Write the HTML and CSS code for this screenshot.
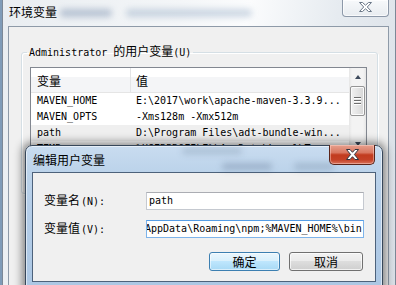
FILE: index.html
```html
<!DOCTYPE html>
<html lang="zh-CN">
<head>
<meta charset="utf-8">
<title>环境变量</title>
<link rel="stylesheet" href="styles.css">
</head>
<body>
<div class="desktop">
  <section class="win win-env">
    <header class="titlebar">
      <span class="title">环境变量</span>
      <span class="smudge s1" aria-hidden="true"></span>
      <span class="smudge s2" aria-hidden="true"></span>
      <span class="close close-off" aria-label="关闭">
        <svg width="13" height="10" viewBox="0 0 13 10"><polygon points="0.5,0.5 3.5,0.5 6.5,3.2 9.5,0.5 12.5,0.5 8.3,5 12.5,9.5 9.5,9.5 6.5,6.8 3.5,9.5 0.5,9.5 4.7,5" fill="#fff" stroke="#6b7888" stroke-width="1"/></svg>
      </span>
    </header>
    <div class="client">
      <fieldset class="group">
        <legend><span class="mono">Administrator </span>的用户变量<span class="mono">(U)</span></legend>
        <div class="listview">
          <div class="lv-main">
            <div class="lv-head"><div class="c1">变量</div><div class="c2">值</div></div>
            <div class="lv-row"><div class="c1">MAVEN_HOME</div><div class="c2">E:\2017\work\apache-maven-3.3.9...</div></div>
            <div class="lv-row"><div class="c1">MAVEN_OPTS</div><div class="c2">-Xms128m -Xmx512m</div></div>
            <div class="lv-row sel"><div class="c1">path</div><div class="c2">D:\Program Files\adt-bundle-win...</div></div>
            <div class="lv-row"><div class="c1">TEMP</div><div class="c2">%USERPROFILE%\AppData\Local\Temp</div></div>
          </div>
          <div class="scrollbar">
            <div class="sb-btn"><span class="arrow up"></span></div>
            <div class="sb-thumb"><i></i><i></i><i></i></div>
            <div class="sb-track"></div>
            <div class="sb-btn"><span class="arrow down"></span></div>
          </div>
        </div>
      </fieldset>
    </div>
  </section>

  <section class="win win-edit">
    <header class="titlebar">
      <span class="title">编辑用户变量</span>
      <span class="smudge d1" aria-hidden="true"></span>
      <span class="smudge d2" aria-hidden="true"></span>
      <span class="smudge d3" aria-hidden="true"></span>
      <span class="close close-red" aria-label="关闭">
        <svg width="13" height="11" viewBox="0 0 13 11"><polygon points="0.5,0.5 4,0.5 6.5,3.3 9,0.5 12.5,0.5 8.4,5.5 12.5,10.5 9,10.5 6.5,7.7 4,10.5 0.5,10.5 4.6,5.5" fill="#fff" stroke="#2f3440" stroke-width="1"/></svg>
      </span>
    </header>
    <div class="client client-edit">
      <div class="form">
        <label class="lbl">变量名<span class="mono">(N):</span></label>
        <div class="field"><span class="mono">path</span></div>
        <label class="lbl">变量值<span class="mono">(V):</span></label>
        <div class="field focus"><span class="mono val">AppData\Roaming\npm;%MAVEN_HOME%\bin</span></div>
      </div>
      <div class="buttons">
        <button class="btn default">确定</button>
        <button class="btn cancel">取消</button>
      </div>
    </div>
  </section>
</div>
</body>
</html>
```
FILE: styles.css
```css
* { box-sizing: border-box; }
html, body { margin: 0; padding: 0; }
body {
  width: 396px;
  height: 285px;
  overflow: hidden;
  background: #7f9bb8;
  font-family: "Noto Sans CJK SC", sans-serif;
  font-size: 12px;
  color: #000;
}
.desktop { position: relative; width: 396px; height: 285px; overflow: hidden; }

.mono {
  font-family: "DejaVu Sans Mono", monospace;
  font-size: 10px;
}

.win { position: absolute; display: flex; flex-direction: column; }
.titlebar { position: relative; display: flex; align-items: flex-start; flex: none; }
.title { font-size: 12px; line-height: 16px; white-space: nowrap; position: relative; z-index: 1; }
.close { display: flex; align-items: center; justify-content: center; position: relative; z-index: 1; }

/* blurred glass reflections */
.smudge { position: absolute; border-radius: 4px; filter: blur(3px); }
.s1 { left: 52px; top: 9px; width: 52px; height: 8px; background: rgba(80,110,150,.35); }
.s2 { left: 118px; top: 9px; width: 126px; height: 8px; background: rgba(90,125,165,.28); }
.d1 { left: 150px; top: 2px; width: 60px; height: 6px; background: rgba(40,60,90,.18); }
.d2 { left: 190px; top: 17px; width: 50px; height: 7px; background: rgba(40,60,90,.22); }
.d3 { left: 262px; top: 17px; width: 40px; height: 7px; background: rgba(40,60,90,.18); }

/* background window */
.win-env {
  left: 2px; top: 0; width: 394px; height: 330px;
  border: 1px solid #7c8897; border-top: 0;
  padding: 0 6px 0 5px;
  background: linear-gradient(100deg, #e9edf1 0%, #f4f6f8 40%, #fbfcfd 55%, #e6ebf0 75%, #d9dfe6 100%);
}
.win-env .titlebar { height: 26px; }
.win-env .title { margin: 4px 0 0 1px; color: #000; }
.close-off {
  width: 47px; height: 17px;
  margin-left: auto;
  border: 1px solid #8d99a9; border-top: 0;
  border-radius: 0 0 4px 4px;
  background: linear-gradient(#f7f9fb, #e8ecf0);
  box-shadow: inset 0 0 0 1px rgba(255,255,255,.7);
  padding-bottom: 2px;
}
.client {
  background: #f0f0f0;
  border: 1px solid #8e9aa8;
}
.win-env .client { flex: 1; padding: 17px 10px 0 12px; }

.group {
  margin: 0; min-width: 0;
  height: 150px;
  padding: 7px 10px 0 8px;
  border: 1px solid #d5dfe5;
  border-radius: 3px;
  box-shadow: inset 1px 1px 0 #fff, 1px 1px 0 #fff;
}
.group legend { padding: 0 2px; margin-left: -3px; line-height: 14px; font-size: 12px; white-space: nowrap; }

.listview {
  display: flex; height: 86px;
  border: 1px solid #828790;
  background: #fff; overflow: hidden;
}
.lv-main { flex: 1; height: 79px; overflow: hidden; }
.lv-head {
  display: flex; height: 25px;
  border-bottom: 1px solid #e5e5e5;
  background: linear-gradient(#fff 0 9px, #f4f5f7 9px);
  font-size: 12px; line-height: 26px;
}
.lv-head .c1 { border-right: 1px solid #e3e4e6; }
.c1 { width: 100px; flex: none; padding-left: 6px; white-space: nowrap; }
.c2 { flex: 1; padding-left: 5px; white-space: nowrap; overflow: hidden; }
.lv-row {
  display: flex; height: 16px; line-height: 16px;
  font-family: "DejaVu Sans Mono", monospace; font-size: 10px;
}
.lv-row.sel { background: #efefef; }

.scrollbar {
  width: 17px; flex: none; display: flex; flex-direction: column;
  background: linear-gradient(90deg, #e6e6e6, #f3f3f3 3px, #f3f3f3 14px, #e6e6e6);
}
.sb-btn { height: 17px; display: flex; align-items: center; justify-content: center; flex: none; }
.arrow { width: 0; height: 0; border-left: 3.5px solid transparent; border-right: 3.5px solid transparent; }
.arrow.up { border-bottom: 4px solid #3d4a5c; }
.arrow.down { border-top: 4px solid #3d4a5c; }
.sb-thumb {
  height: 30px; margin: 1px 1px 0 1px; flex: none;
  border: 1px solid #959595; border-radius: 2px;
  background: linear-gradient(90deg, #f1f1f1, #e4e4e4 50%, #d6d6d6);
  box-shadow: inset 0 0 0 1px #fbfbfb;
  display: flex; flex-direction: column; align-items: center; justify-content: center; gap: 1px;
}
.sb-thumb i { display: block; width: 7px; background: #6d6d6d; border-bottom: 1px solid #fff; height: 2px; }
.sb-track { flex: 1; }

/* edit dialog */
.win-edit {
  left: 25px; top: 145px; width: 358px; height: 160px;
  border: 1px solid #37475a;
  border-radius: 7px 7px 0 0;
  padding: 0 6px;
  background: linear-gradient(180deg, #c9dcf0 0%, #bcd3ea 26px, #b4cde8 60px, #aac6e3 100%);
  box-shadow: 0 0 9px 3px rgba(0,0,0,.45), inset 0 0 0 1px rgba(255,255,255,.55);
}
.win-edit .titlebar { height: 26px; }
.win-edit .title { margin: 6px 0 0 1px; }
.close-red {
  width: 46px; height: 20px;
  margin: -1px 1px 0 auto;
  border: 1px solid #5b2419; border-top: 0;
  border-radius: 0 0 5px 5px;
  background: linear-gradient(180deg, #e6a08e 0%, #d97761 40%, #c23b1f 52%, #c44127 78%, #d9745c 100%);
  box-shadow: inset 0 0 0 1px rgba(255,220,210,.45);
}
.client-edit {
  height: 110px;
  border-color: #4d627b;
  padding: 19px 11px 0 11px;
}
.form {
  display: grid;
  grid-template-columns: 102px 218px;
  row-gap: 10px;
  align-items: center;
}
.lbl { font-size: 12px; line-height: 16px; white-space: nowrap; }
.lbl .mono { margin-left: 1px; }
.field {
  height: 18px; background: #fff;
  border: 1px solid #c5c9d0; border-top-color: #abadb3;
  padding: 0 2px; line-height: 16px;
  display: flex; overflow: hidden; white-space: nowrap;
}
.field.focus { border-color: #7eb4ea; border-top-color: #569de5; padding: 0; }
.val { margin-left: -2px; }
.buttons { display: flex; justify-content: flex-end; gap: 9px; margin: 14px 1px 0 0; }
.btn {
  height: 19px; padding: 0; margin: 0;
  font-family: "Noto Sans CJK SC", sans-serif; font-size: 12px; line-height: 16px; color: #000;
  border-radius: 3px;
}
.btn.default {
  width: 71px;
  border: 1px solid #3c7fb1;
  background: linear-gradient(180deg, #eaf6fd 0%, #d9f0fc 45%, #bee6fd 50%, #a7d9f5 100%);
  box-shadow: inset 0 0 0 1px rgba(255,255,255,.55);
}
.btn.cancel {
  width: 74px;
  border: 1px solid #707070;
  background: linear-gradient(180deg, #f2f2f2 0%, #ebebeb 45%, #dddddd 50%, #cfcfcf 100%);
  box-shadow: inset 0 0 0 1px rgba(255,255,255,.7);
}
```
